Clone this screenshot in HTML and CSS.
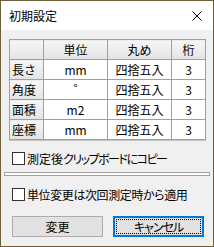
FILE: index.html
```html
<!DOCTYPE html>
<html lang="ja">
<head>
    <meta charset="UTF-8">
    <title>初期設定</title>
    <link rel="stylesheet" href="styles.css">
</head>
<body>
    <div class="dlg">
        <div class="titleBar">
            <span class="title">初期設定</span>
            <svg class="closeBtn" width="10" height="10" viewBox="0 0 10 10">
                <path d="M0.5 0.5 L9.5 9.5 M9.5 0.5 L0.5 9.5" stroke="#000" stroke-width="1" fill="none"/>
            </svg>
        </div>
        <div class="content">
            <table class="grid">
                <colgroup>
                    <col style="width:34px"><col style="width:64px"><col style="width:64px"><col style="width:34px">
                </colgroup>
                <tr class="head"><th></th><th>単位</th><th>丸め</th><th>桁</th></tr>
                <tr><th>長さ</th><td>mm</td><td>四捨五入</td><td>3</td></tr>
                <tr><th>角度</th><td class="deg">°</td><td>四捨五入</td><td>3</td></tr>
                <tr><th>面積</th><td>m2</td><td>四捨五入</td><td>3</td></tr>
                <tr><th>座標</th><td>mm</td><td>四捨五入</td><td>3</td></tr>
            </table>

            <label class="chk first"><span class="box"></span><span class="lbl">測定後<span class="kana">クリップボードにコピー</span></span></label>
            <div class="sep"></div>
            <label class="chk second"><span class="box"></span><span class="lbl tight">単位変更は次回測定時から適用</span></label>

            <div class="btns">
                <div class="btn">変更</div>
                <div class="btn focus"><span class="focusRing">キャンセル</span></div>
            </div>
        </div>
    </div>
</body>
</html>
```

FILE: styles.css
```css
* { margin: 0; padding: 0; box-sizing: border-box; }

body {
    font-family: "Noto Sans CJK JP", "Liberation Sans", sans-serif;
    font-size: 12px;
    color: #000;
    background: #fff;
}

/* ダイアログ外枠 */
.dlg {
    width: 214px; height: 247px;
    border: 1px solid #6f5e3c;
    background: #f0f0f0;
    display: flex; flex-direction: column;
}

.titleBar {
    height: 29px; background: #fff;
    display: flex; align-items: center; justify-content: space-between;
    padding: 0 11px 0 8px;
}
.title { font-size: 12px; line-height: 14px; }
.closeBtn { display: block; }

.content {
    flex: 1;
    padding: 9px 8px 0 8px;
    display: flex; flex-direction: column;
}

/* 設定テーブル */
.grid {
    width: 196px;
    table-layout: fixed;
    border-collapse: collapse;
    background: #fff;
    box-shadow: 0 1px 0 #c4c4c4;
}
.grid th, .grid td {
    border: 1px solid #a0a0a0;
    height: 20px; line-height: 18px;
    font-weight: normal;
    text-align: center;
    padding: 0;
    white-space: nowrap;
}
.grid th { background: linear-gradient(#f6f6f6, #e4e4e4); }
.grid tr th:first-child { text-align: left; padding-left: 2px; }
.grid .deg { vertical-align: top; line-height: 16px; }

/* チェックボックス */
.chk {
    display: flex; align-items: center;
    height: 13px;
    margin-left: 3px;
}
.chk.first { margin-top: 12px; }
.chk.second { margin-top: 12px; }
.box {
    width: 13px; height: 13px;
    border: 1px solid #333;
    background: #fff;
    flex: none;
}
.lbl {
    margin-left: 2px;
    line-height: 13px;
    font-feature-settings: "palt";
    white-space: nowrap;
}
.kana { letter-spacing: -1.5px; }
.lbl.tight { letter-spacing: -0.4px; }

.sep {
    margin: 7px -5px 0 -5px;
    height: 4px;
    border: 1px solid #a0a0a0;
    background: #fff;
}

/* ボタン */
.btns {
    margin-top: 15px;
    display: flex; justify-content: space-between;
    padding: 0 1px 0 3px;
}
.btn {
    width: 91px; height: 21px;
    border: 1px solid #adadad;
    background: #e1e1e1;
    display: flex; align-items: center; justify-content: center;
    line-height: 14px;
}
.btn.focus {
    border: 2px solid #0078d7;
    padding: 1px;
}
.focusRing {
    flex: 1; align-self: stretch;
    border: 1px dotted #000;
    display: flex; align-items: center; justify-content: center;
    font-feature-settings: "palt";
    letter-spacing: -1px;
}
```
